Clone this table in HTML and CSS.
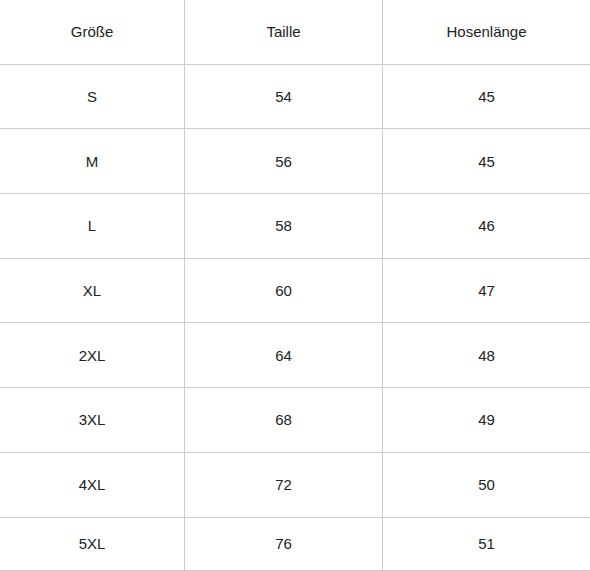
FILE: index.html
```html
<!DOCTYPE html>
<html lang="de">
<head>
<meta charset="utf-8">
<title>Größentabelle</title>
<link rel="stylesheet" href="styles.css">
</head>
<body>
<div class="size-table">
  <div class="cell">Größe</div><div class="cell">Taille</div><div class="cell">Hosenlänge</div>
  <div class="cell">S</div><div class="cell">54</div><div class="cell">45</div>
  <div class="cell">M</div><div class="cell">56</div><div class="cell">45</div>
  <div class="cell">L</div><div class="cell">58</div><div class="cell">46</div>
  <div class="cell">XL</div><div class="cell">60</div><div class="cell">47</div>
  <div class="cell">2XL</div><div class="cell">64</div><div class="cell">48</div>
  <div class="cell">3XL</div><div class="cell">68</div><div class="cell">49</div>
  <div class="cell">4XL</div><div class="cell">72</div><div class="cell">50</div>
  <div class="cell last">5XL</div><div class="cell last">76</div><div class="cell last">51</div>
</div>
</body>
</html>
```
FILE: styles.css
```css
html, body {
  margin: 0;
  padding: 0;
  background: #fff;
}
.size-table {
  display: grid;
  grid-template-columns: 185px 198px 1fr;
  width: 590px;
  font-family: "Liberation Sans", Arial, sans-serif;
  font-size: 15px;
  color: #222;
}
.cell {
  box-sizing: border-box;
  height: 64.7px;
  display: flex;
  align-items: center;
  justify-content: center;
  border-bottom: 1px solid #ccc;
  border-right: 1px solid #ccc;
}
.cell:nth-child(3n) {
  border-right: none;
}
.cell.last {
  height: 53px;
}
```
